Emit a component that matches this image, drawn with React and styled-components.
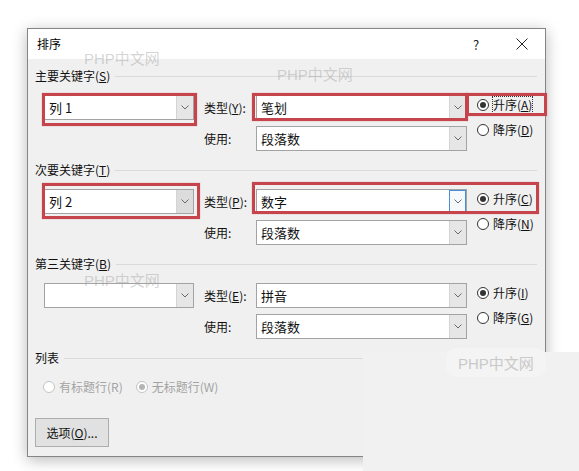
import React from "react";
import styled, { createGlobalStyle } from "styled-components";

const GlobalStyle = createGlobalStyle`
  html, body { margin: 0; padding: 0; background: #ffffff; }
  body { font-family: "Noto Sans CJK SC", "Noto Sans", sans-serif; color: #000; }
  * { box-sizing: border-box; }
`;

const Page = styled.div`
  position: relative;
  width: 579px;
  height: 471px;
  overflow: hidden;
  padding: 28px 0 0 27px;
  background: #fff;
`;

const Dialog = styled.div`
  width: 519px;
  height: 429px;
  border: 1px solid #858585;
  background: #f0f0f0;
  box-shadow: 0 3px 14px rgba(0, 0, 0, 0.28);
  display: flex;
  flex-direction: column;
`;

const TitleBar = styled.div`
  height: 30px;
  background: #ffffff;
  display: flex;
  align-items: center;
  flex-shrink: 0;
`;

const Title = styled.div`
  flex: 1;
  padding-left: 9px;
  font-size: 12px;
  line-height: 16px;
`;

const TitleButton = styled.div`
  width: 46px;
  height: 30px;
  display: flex;
  align-items: center;
  justify-content: center;
  font-size: 13px;
  color: #222;
`;

const Body = styled.div`
  padding: 8px 8px 0 7px;
  display: flex;
  flex-direction: column;
`;

const Header = styled.div`
  height: 18px;
  display: flex;
  align-items: center;
  gap: 5px;
  font-size: 12px;
  line-height: 16px;
  margin-bottom: 10px;
  white-space: nowrap;
  color: #111;
  &::after {
    content: "";
    flex: 1;
    height: 1px;
    background: #dadada;
  }
`;

const U = styled.span`
  text-decoration: underline;
  text-underline-offset: 1px;
`;

const SectionBody = styled.div`
  display: flex;
  align-items: flex-start;
  padding-left: 9px;
  margin-bottom: 10px;
`;

const KeyCol = styled.div`
  width: 150px;
`;

const FieldsGrid = styled.div`
  margin-left: 10px;
  display: grid;
  grid-template-columns: 52px 211px;
  grid-auto-rows: 25px;
  row-gap: 6px;
  align-items: center;
`;

const FieldLabel = styled.div`
  font-size: 12px;
  line-height: 16px;
  white-space: nowrap;
  color: #111;
`;

const RadioCol = styled.div`
  margin-left: 10px;
  display: flex;
  flex-direction: column;
  gap: 5px;
`;

const Highlight = styled.div`
  position: relative;
  &::after {
    content: "";
    position: absolute;
    top: ${(p) => p.$t}px;
    left: ${(p) => p.$l}px;
    right: ${(p) => p.$r}px;
    bottom: ${(p) => p.$b}px;
    border: 3px solid #c6454c;
    box-shadow: 0 0 1px rgba(198, 69, 76, 0.6);
    pointer-events: none;
  }
`;

const ComboBox = styled.div`
  height: 25px;
  background: #ffffff;
  border: 1px solid #a3a3a3;
  display: flex;
  align-items: stretch;
`;

const ComboText = styled.div`
  flex: 1;
  padding-left: 4px;
  font-size: 13px;
  line-height: 23px;
  white-space: nowrap;
  color: #111;
`;

const DropButton = styled.div`
  width: 17px;
  display: flex;
  align-items: center;
  justify-content: center;
  background: ${(p) => (p.$hover ? "#dcdcdc" : p.$focus ? "#f6f9fc" : "#e6e6e6")};
  border-left: 1px solid ${(p) => (p.$focus ? "#4a8fd3" : "#d4d4d4")};
  outline: ${(p) => (p.$focus ? "1px solid #4a8fd3" : "none")};
  outline-offset: -1px;
`;

const Chevron = () => (
  <svg width="8" height="5" viewBox="0 0 8 5">
    <path d="M0.5 0.5 L4 4 L7.5 0.5" fill="none" stroke="#6a6a6a" strokeWidth="1" />
  </svg>
);

const Combo = ({ text, hover, focus }) => (
  <ComboBox>
    <ComboText>{text}</ComboText>
    <DropButton $hover={hover} $focus={focus}>
      <Chevron />
    </DropButton>
  </ComboBox>
);

const RadioItem = styled.div`
  height: 20px;
  display: flex;
  align-items: center;
  gap: 4px;
  font-size: 12px;
  line-height: 16px;
  white-space: nowrap;
  color: ${(p) => (p.$disabled ? "#a3a3a3" : "#111")};
`;

const Circle = styled.span`
  width: 12px;
  height: 12px;
  border-radius: 50%;
  border: 1px solid ${(p) => (p.$disabled ? "#c4c4c4" : "#333")};
  background: #fff;
  display: flex;
  align-items: center;
  justify-content: center;
  flex-shrink: 0;
  &::after {
    content: "";
    display: ${(p) => (p.$checked ? "block" : "none")};
    width: 6px;
    height: 6px;
    border-radius: 50%;
    background: ${(p) => (p.$disabled ? "#b4b4b4" : "#333")};
  }
`;

const RadioText = styled.span`
  outline: ${(p) => (p.$focus ? "1px dotted #333" : "none")};
  outline-offset: 0;
`;

const Radio = ({ checked, disabled, focus, children }) => (
  <RadioItem $disabled={disabled}>
    <Circle $checked={checked} $disabled={disabled} />
    <RadioText $focus={focus}>{children}</RadioText>
  </RadioItem>
);

const ListRow = styled.div`
  display: flex;
  align-items: center;
  gap: 13px;
  padding-left: 8px;
`;

const OptionButton = styled.div`
  margin-top: 21px;
  width: 74px;
  height: 29px;
  background: #e1e1e1;
  border: 1px solid #adadad;
  display: flex;
  align-items: center;
  justify-content: center;
  font-size: 12px;
  color: #111;
`;

const Watermark = styled.div`
  position: absolute;
  left: ${(p) => p.$x}px;
  top: ${(p) => p.$y}px;
  font-family: "Liberation Sans", "Noto Sans CJK SC", sans-serif;
  font-size: 15px;
  color: rgba(160, 160, 160, 0.45);
  white-space: nowrap;
  pointer-events: none;
`;

const CornerCover = styled.div`
  position: absolute;
  left: 363px;
  top: 352px;
  right: 0;
  bottom: 0;
  background: #f1f1f1;
`;

const CornerMark = styled.div`
  position: absolute;
  left: 83px;
  top: -4px;
  padding: 4px 12px;
  border-radius: 10px;
  background: #f4f4f4;
  font-family: "Liberation Sans", "Noto Sans CJK SC", sans-serif;
  font-size: 15px;
  color: #c9c9c9;
  white-space: nowrap;
`;

const CloseIcon = () => (
  <svg width="12" height="12" viewBox="0 0 12 12">
    <path d="M0.5 0.5 L11.5 11.5 M11.5 0.5 L0.5 11.5" stroke="#222" strokeWidth="1" fill="none" />
  </svg>
);

export default function App() {
  return (
    <>
      <GlobalStyle />
      <Page>
        <Dialog>
          <TitleBar>
            <Title>排序</Title>
            <TitleButton>?</TitleButton>
            <TitleButton>
              <CloseIcon />
            </TitleButton>
          </TitleBar>
          <Body>
            <Header>
              <span>主要关键字(<U>S</U>)</span>
            </Header>
            <SectionBody>
              <KeyCol>
                <Highlight $t={-2} $l={-2} $r={-3} $b={-6}>
                  <Combo text="列 1" />
                </Highlight>
              </KeyCol>
              <FieldsGrid>
                <FieldLabel>类型(<U>Y</U>):</FieldLabel>
                <Highlight $t={-2} $l={-4} $r={-1} $b={-1}>
                  <Combo text="笔划" />
                </Highlight>
                <FieldLabel>使用:</FieldLabel>
                <Combo text="段落数" />
              </FieldsGrid>
              <RadioCol>
                <Highlight $t={-2} $l={-11} $r={-14} $b={-1}>
                  <Radio checked focus>
                    升序(<U>A</U>)
                  </Radio>
                </Highlight>
                <Radio>
                  降序(<U>D</U>)
                </Radio>
              </RadioCol>
            </SectionBody>

            <Header>
              <span>次要关键字(<U>T</U>)</span>
            </Header>
            <SectionBody>
              <KeyCol>
                <Highlight $t={-6} $l={-2} $r={-6} $b={-5}>
                  <Combo text="列 2" hover />
                </Highlight>
              </KeyCol>
              <FieldsGrid>
                <FieldLabel>类型(<U>P</U>):</FieldLabel>
                <Highlight $t={-7} $l={-4} $r={-72} $b={0}>
                  <Combo text="数字" focus />
                </Highlight>
                <FieldLabel>使用:</FieldLabel>
                <Combo text="段落数" />
              </FieldsGrid>
              <RadioCol>
                <Radio checked>
                  升序(<U>C</U>)
                </Radio>
                <Radio>
                  降序(<U>N</U>)
                </Radio>
              </RadioCol>
            </SectionBody>

            <Header>
              <span>第三关键字(<U>B</U>)</span>
            </Header>
            <SectionBody>
              <KeyCol>
                <Combo text="" />
              </KeyCol>
              <FieldsGrid>
                <FieldLabel>类型(<U>E</U>):</FieldLabel>
                <Combo text="拼音" />
                <FieldLabel>使用:</FieldLabel>
                <Combo text="段落数" />
              </FieldsGrid>
              <RadioCol>
                <Radio checked>
                  升序(<U>I</U>)
                </Radio>
                <Radio>
                  降序(<U>G</U>)
                </Radio>
              </RadioCol>
            </SectionBody>

            <Header>
              <span>列表</span>
            </Header>
            <ListRow>
              <Radio disabled>有标题行(R)</Radio>
              <Radio disabled checked>
                无标题行(W)
              </Radio>
            </ListRow>
            <OptionButton>
              <span>
                选项(<U>O</U>)...
              </span>
            </OptionButton>
          </Body>
        </Dialog>

        <Watermark $x={84} $y={47}>PHP中文网</Watermark>
        <Watermark $x={277} $y={63}>PHP中文网</Watermark>
        <Watermark $x={84} $y={269}>PHP中文网</Watermark>
        <CornerCover>
          <CornerMark>PHP中文网</CornerMark>
        </CornerCover>
      </Page>
    </>
  );
}
